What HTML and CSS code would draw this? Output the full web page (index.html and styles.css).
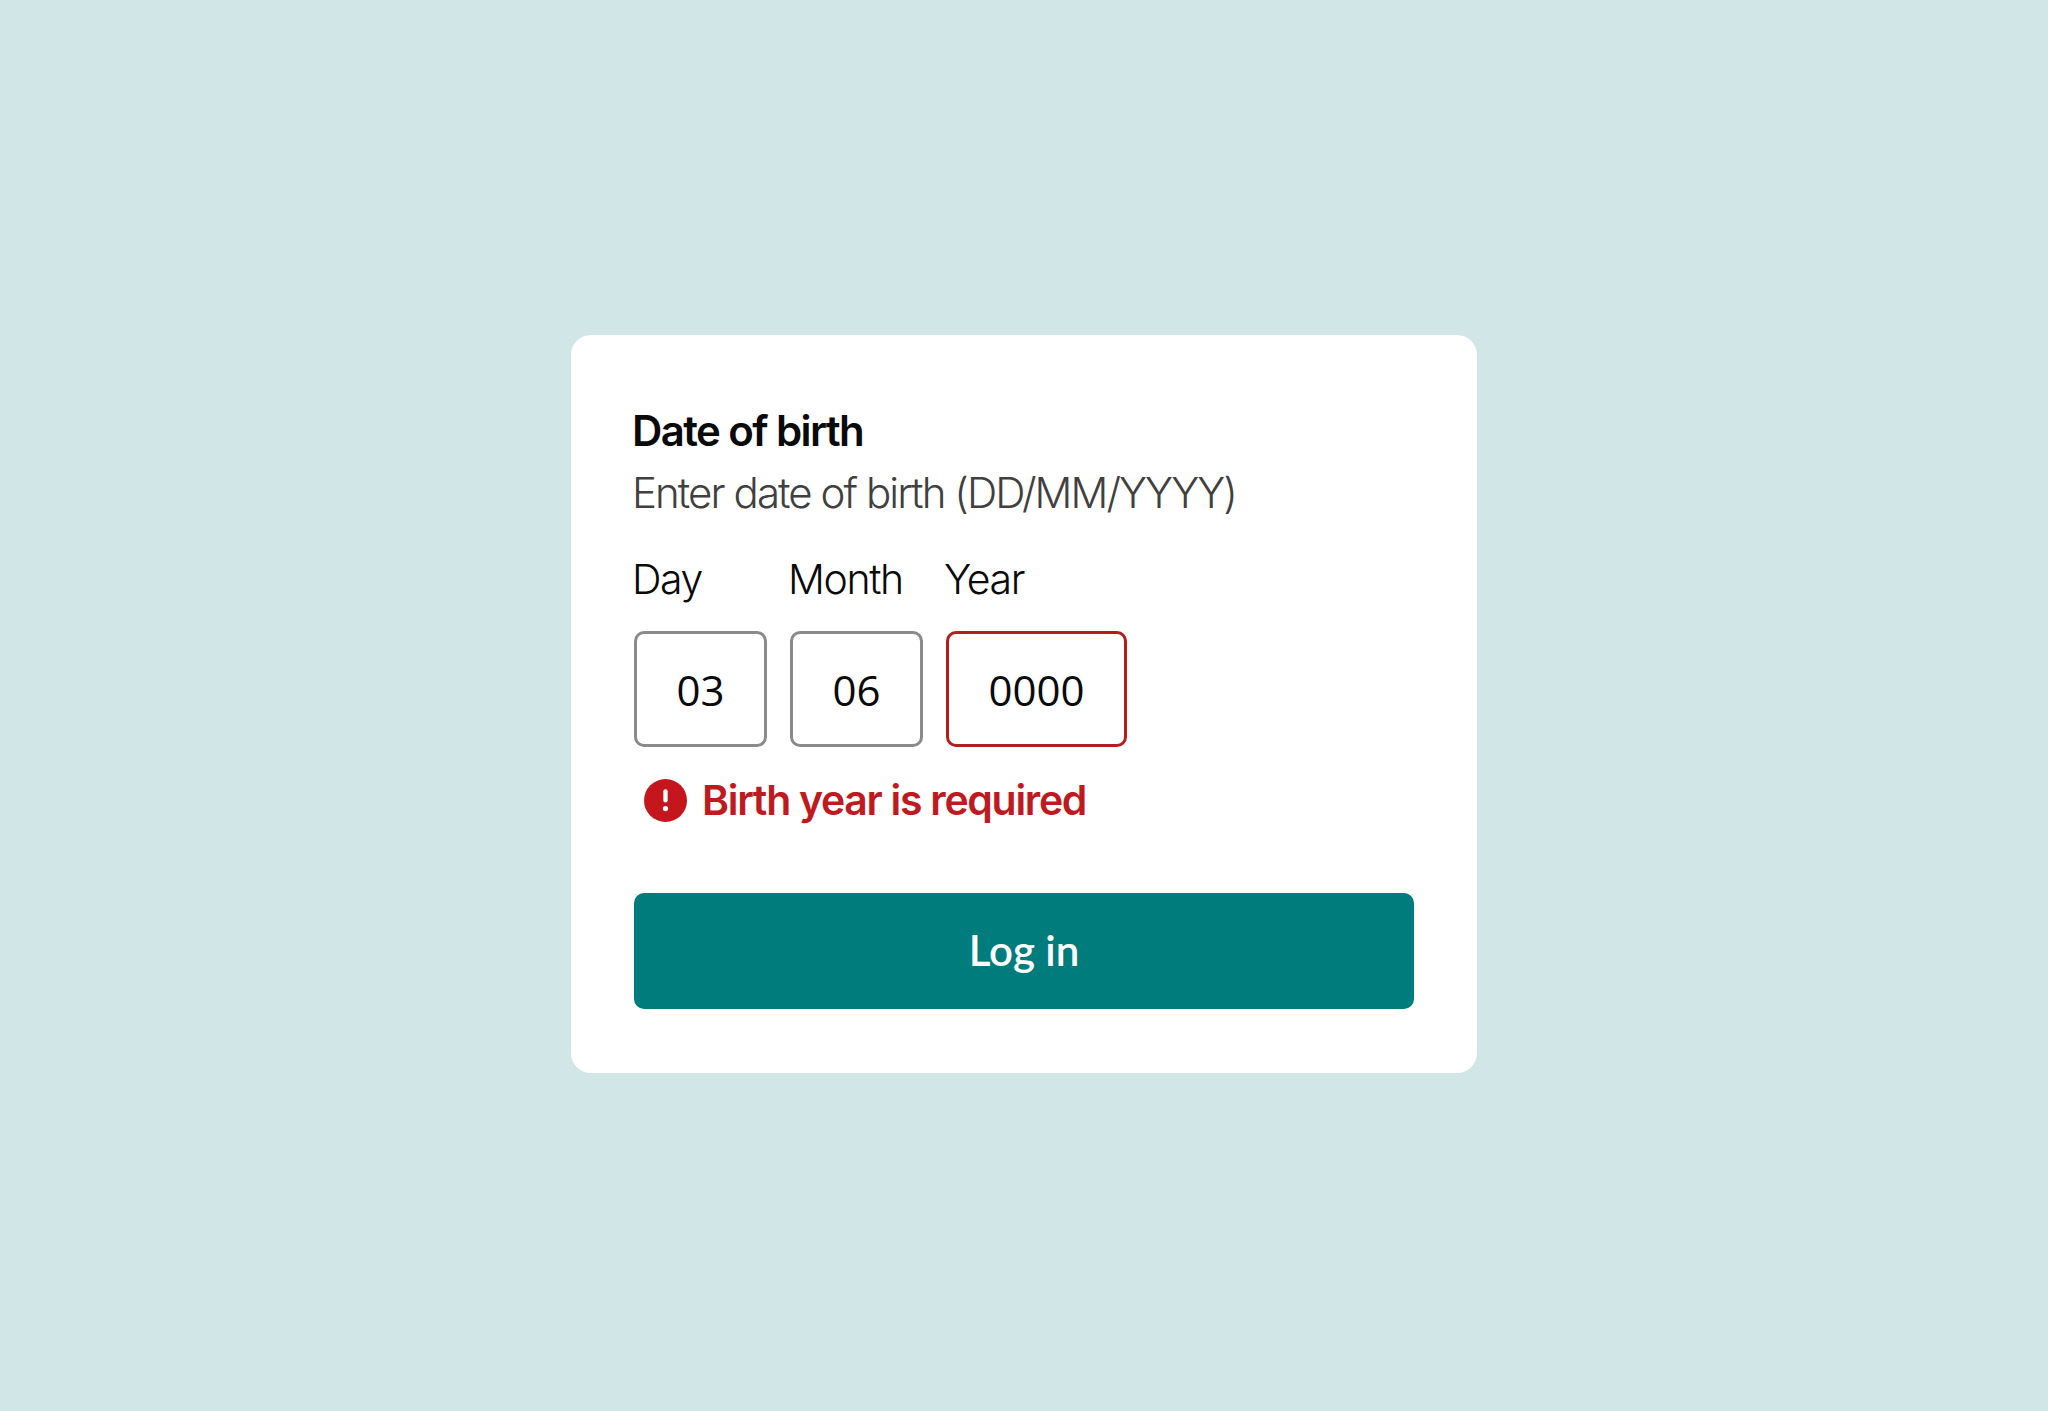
FILE: index.html
```html
<!DOCTYPE html>
<html lang="en">
<head>
  <meta charset="UTF-8" />
  <meta name="viewport" content="width=device-width, initial-scale=1" />
  <title>Date of birth</title>
  <link rel="stylesheet" href="styles.css">
</head>
<body>
  <form class="card">
    <h1 class="title">Date of birth</h1>
    <p class="hint">Enter date of birth (DD/MM/YYYY)</p>

    <div class="date-fields">
      <div class="field">
        <label class="field-label" for="day">Day</label>
        <input class="field-input" id="day" type="text" value="03" />
      </div>
      <div class="field">
        <label class="field-label" for="month">Month</label>
        <input class="field-input" id="month" type="text" value="06" />
      </div>
      <div class="field">
        <label class="field-label" for="year">Year</label>
        <input class="field-input field-input-year" id="year" type="text" value="0000" />
      </div>
    </div>

    <div class="error">
      <svg class="error-icon" viewBox="0 0 44 44" aria-hidden="true">
        <circle cx="22" cy="22" r="22" fill="#c4161c" />
        <rect x="19.8" y="10.5" width="4.4" height="13.5" rx="2" fill="#fff" />
        <circle cx="22" cy="30.2" r="2.7" fill="#fff" />
      </svg>
      <span>Birth year is required</span>
    </div>

    <button class="login-btn" type="button">Log in</button>
  </form>
</body>
</html>
```

FILE: styles.css
```css
* {
  box-sizing: border-box;
}

body {
  margin: 0;
  min-height: 1411px;
  padding-bottom: 3px;
  display: flex;
  align-items: center;
  justify-content: center;
  background-color: #d1e6e6;
  font-family: "Inter", "Noto Sans", sans-serif;
}

.card {
  width: 906px;
  height: 738px;
  padding: 71px 63px 63px;
  background-color: #ffffff;
  border-radius: 20px;
}

.title {
  margin: 0 0 0 -2px;
  font-size: 42px;
  line-height: 50px;
  font-weight: 600;
  letter-spacing: -1.6px;
  color: #0a0a0a;
}

.hint {
  margin: 12px 0 0 -2px;
  font-size: 42px;
  line-height: 50px;
  font-weight: 300;
  letter-spacing: -1.93px;
  color: #404040;
}

.date-fields {
  display: flex;
  gap: 23px;
  margin-top: 36px;
}

.field {
  display: flex;
  flex-direction: column;
}

.field-label {
  margin-left: -2px;
  font-size: 41px;
  line-height: 50px;
  font-weight: 300;
  letter-spacing: -1.4px;
  color: #0a0a0a;
}

.field-input {
  width: 133px;
  height: 116px;
  margin-top: 27px;
  border: 3px solid #8a8a8a;
  border-radius: 10px;
  background: #ffffff;
  text-align: center;
  font-family: "Open Sans", sans-serif;
  font-size: 42px;
  color: #0a0a0a;
  padding: 0;
}

.field-input-year {
  width: 181px;
  border-color: #b71c1c;
}

.error {
  display: flex;
  align-items: center;
  gap: 15px;
  margin: 28px 0 0 10px;
  font-size: 41px;
  line-height: 50px;
  font-weight: 600;
  letter-spacing: -1.3px;
  color: #bf1a1f;
}

.error-icon {
  width: 43px;
  height: 43px;
  flex-shrink: 0;
}

.login-btn {
  display: block;
  width: 780px;
  height: 116px;
  margin-top: 68px;
  padding: 0 0 2px;
  border: none;
  border-radius: 10px;
  background-color: #007c7c;
  color: #ffffff;
  font-family: "Lato", sans-serif;
  font-size: 42px;
  font-weight: 600;
  cursor: pointer;
}
```
